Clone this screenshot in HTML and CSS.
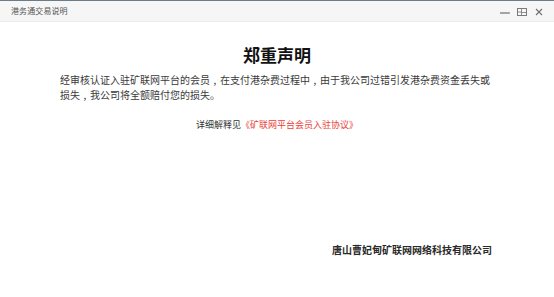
FILE: index.html
```html
<!DOCTYPE html>
<html lang="zh">
<head>
<meta charset="utf-8">
<title>港务通交易说明</title>
<link rel="stylesheet" href="styles.css">
</head>
<body>
<div class="window">
  <div class="titlebar">
    <span class="title">港务通交易说明</span>
    <div class="controls">
      <svg class="ctl" width="10" height="10" viewBox="0 0 10 10"><line x1="0" y1="6" x2="10" y2="6" stroke="#6f6f6f" stroke-width="1.2"/></svg>
      <svg class="ctl" width="10" height="10" viewBox="0 0 10 10"><rect x="0.5" y="1.5" width="9" height="7" fill="none" stroke="#7a7a7a" stroke-width="1"/><rect x="4.5" y="1.5" width="5" height="4" fill="none" stroke="#7a7a7a" stroke-width="0.8"/><rect x="0.5" y="5" width="4" height="3.5" fill="none" stroke="#7a7a7a" stroke-width="0.8"/></svg>
      <svg class="ctl" width="10" height="10" viewBox="0 0 10 10"><path d="M2 2 L8 8 M8 2 L2 8" stroke="#6f6f6f" stroke-width="1.1"/></svg>
    </div>
  </div>
  <div class="content">
    <h1 class="heading">郑重声明</h1>
    <p class="statement">经审核认证入驻矿联网平台的会员<span class="punct">,</span>在支付港杂费过程中<span class="punct">,</span>由于我公司过错引发港杂费资金丢失或损失<span class="punct">,</span>我公司将全额赔付您的损失。</p>
    <p class="detail">详细解释见<a class="agreement" href="#">《矿联网平台会员入驻协议》</a></p>
    <p class="company">唐山曹妃甸矿联网网络科技有限公司</p>
  </div>
</div>
</body>
</html>
```

FILE: styles.css
```css
html, body {
  margin: 0;
  padding: 0;
  background: #ffffff;
}
body {
  width: 554px;
  height: 297px;
  overflow: hidden;
  font-family: "Noto Sans CJK SC", "Noto Sans", sans-serif;
  color: #333;
}
.window {
  display: flex;
  flex-direction: column;
  height: 297px;
}
.titlebar {
  border-top: 1px solid #6d7c8b;
  background: #f6f6f6;
  border-bottom: 1px solid #ececec;
  box-sizing: border-box;
  height: 22px;
  display: flex;
  align-items: center;
  justify-content: space-between;
  padding: 0 10px 0 11px;
}
.title {
  font-size: 8px;
  line-height: 12px;
  color: #555;
  letter-spacing: 0.1px;
}
.controls {
  display: flex;
  align-items: center;
  gap: 7px;
  margin-top: 1px;
}
.ctl {
  display: block;
}
.content {
  display: flex;
  flex-direction: column;
  padding: 0 60px;
}
.heading {
  margin: 23px 0 0;
  font-size: 17px;
  line-height: 20px;
  font-weight: 700;
  color: #111;
  text-align: center;
}
.statement {
  margin: 7px 0 0;
  font-size: 10px;
  line-height: 15px;
  color: #3a3a3a;
}
.punct {
  display: inline-block;
  width: 1em;
  text-align: center;
}
.detail {
  margin: 16px 0 0;
  font-size: 9px;
  line-height: 14px;
  text-align: center;
  color: #333;
}
.agreement {
  color: #e8423a;
  text-decoration: none;
}
.company {
  margin: 111px 2px 0 0;
  font-size: 10px;
  line-height: 14px;
  font-weight: 700;
  color: #2a2a2a;
  text-align: right;
}
```
